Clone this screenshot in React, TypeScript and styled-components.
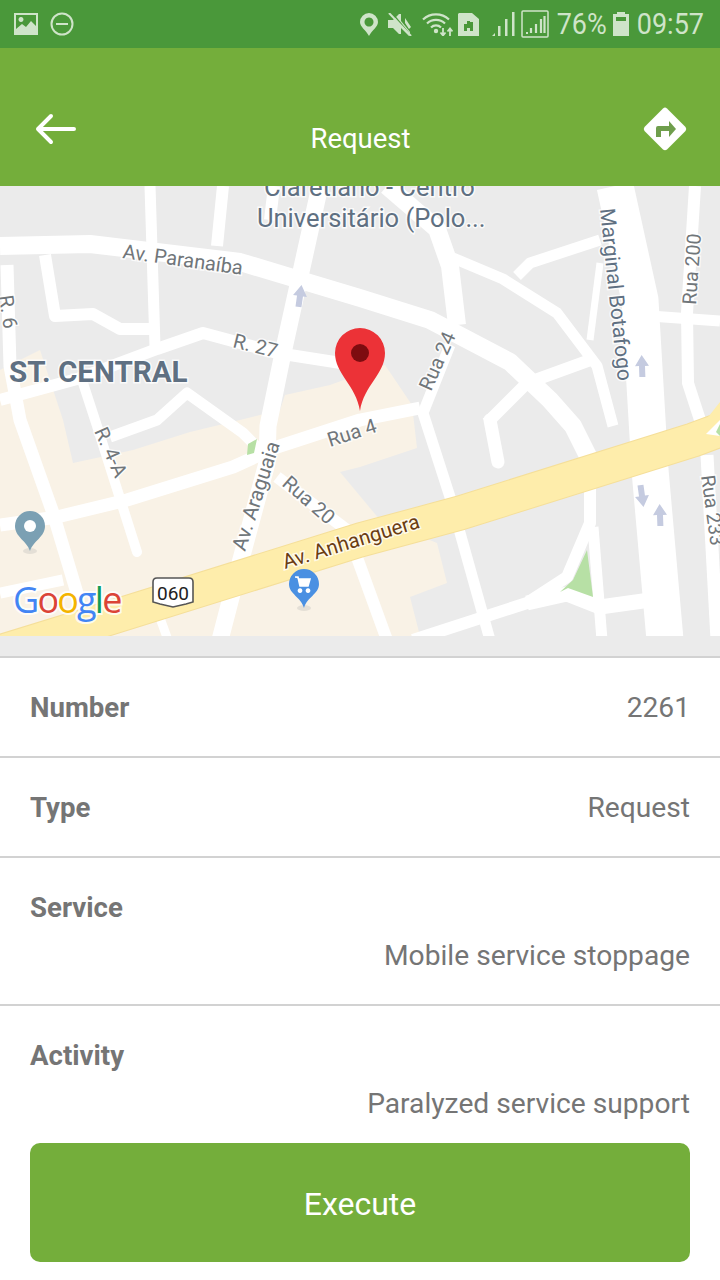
import React from "react";
import styled, { createGlobalStyle } from "styled-components";

const GlobalStyle = createGlobalStyle`
  html, body {
    margin: 0;
    padding: 0;
    background: #ffffff;
  }
  body {
    font-family: Roboto, "Liberation Sans", sans-serif;
  }
`;

const Page = styled.div`
  width: 720px;
  height: 1280px;
  overflow: hidden;
  display: flex;
  flex-direction: column;
  background: #ffffff;
`;

const StatusBar = styled.div`
  height: 48px;
  flex: none;
  background: #4a983a;
  color: #cfe4c9;
  display: flex;
  align-items: center;
  justify-content: space-between;
  padding: 0 16px 0 14px;
`;

const StatusGroup = styled.div`
  display: flex;
  align-items: center;
`;

const StatusIcon = styled.svg<{ $ml?: number }>`
  display: block;
  flex: none;
  margin-left: ${(p) => p.$ml ?? 0}px;
`;

const StatusText = styled.span<{ $ml: number }>`
  margin-left: ${(p) => p.$ml}px;
  font-size: 27px;
  line-height: 48px;
  transform: scaleY(1.08);
`;

const AppBar = styled.header`
  height: 138px;
  flex: none;
  background: #74ae3b;
  display: grid;
  grid-template-columns: 1fr auto 1fr;
  align-items: center;
  padding: 0 33px 0 34px;
  color: #ffffff;
`;

const AppTitle = styled.h1`
  margin: 44px 0 0;
  font-size: 27.500px;
  line-height: 36px;
  font-weight: 400;
`;

const IconSlot = styled.div<{ $end?: boolean }>`
  display: flex;
  margin-top: 24px;
  justify-content: ${(p) => (p.$end ? "flex-end" : "flex-start")};
`;

const MapPanel = styled.svg`
  display: block;
  flex: none;
  width: 720px;
  height: 450px;
  background: #ebebeb;
`;

const Road = styled.polyline<{ $w: number; $cap?: string }>`
  fill: none;
  stroke: #ffffff;
  stroke-width: ${(p) => p.$w}px;
  stroke-linejoin: round;
  stroke-linecap: ${(p) => p.$cap ?? "butt"};
`;

const Highway = styled.polyline<{ $edge?: boolean }>`
  fill: none;
  stroke: ${(p) => (p.$edge ? "#f5df9a" : "#feedab")};
  stroke-width: ${(p) => (p.$edge ? 35 : 33)}px;
  stroke-linejoin: round;
`;

const MapLabel = styled.text<{ $size: number; $color: string; $bold?: boolean }>`
  font-family: Roboto, "Liberation Sans", sans-serif;
  font-size: ${(p) => p.$size}px;
  font-weight: ${(p) => (p.$bold ? 700 : 400)};
  fill: ${(p) => p.$color};
  stroke: #ffffff;
  stroke-width: 3px;
  stroke-opacity: 0.75;
  paint-order: stroke;
`;

const GoogleMark = styled.text`
  font-family: "Open Sans", Roboto, sans-serif;
  font-size: 36px;
  font-weight: 500;
  letter-spacing: -1.800px;
  stroke: #ffffff;
  stroke-width: 4px;
  stroke-opacity: 0.8;
  paint-order: stroke;
`;

const ShieldNumber = styled.text`
  font-family: Roboto, "Liberation Sans", sans-serif;
  font-size: 19px;
  fill: #222222;
  text-anchor: middle;
`;

const MapGap = styled.div`
  height: 20px;
  flex: none;
  background: #ebebeb;
`;

const InfoRow = styled.div<{ $stacked?: boolean }>`
  flex: none;
  border-top: 2px solid #d2d2d2;
  padding: 26px 30px 24px;
  display: ${(p) => (p.$stacked ? "block" : "flex")};
  justify-content: space-between;
  font-size: 28.200px;
  line-height: 48px;
  color: #757575;
`;

const InfoLabel = styled.div`
  font-size: 27.600px;
  font-weight: 700;
`;

const InfoValue = styled.div`
  text-align: right;
`;

const ExecuteButton = styled.button`
  display: block;
  flex: none;
  margin: -9px 30px 0;
  height: 119px;
  width: 660px;
  padding: 2px 0 0;
  border: none;
  border-radius: 10px;
  background: #74ae3b;
  color: #ffffff;
  font-family: Roboto, "Liberation Sans", sans-serif;
  font-size: 32px;
`;

const beige =
  "0,370 40,350 63,420 73,463 133,450 190,432 240,420 280,410 285,395 330,385 385,365 412,405 417,448 360,467 340,472 380,520 437,543 447,583 410,597 420,636 0,636";

const roads: { pts: string; w: number; cap?: string }[] = [
  { pts: "0,246 90,244 240,262 300,280 360,298 430,320 510,362 550,400 573,426 590,460", w: 18 },
  { pts: "150,186 155,346", w: 11 },
  { pts: "223,186 217,246", w: 12 },
  { pts: "274,186 270,220", w: 12 },
  { pts: "320,186 283,353 268,426 267,463 240,563 220,640", w: 17 },
  { pts: "0,400 77,379 157,349 203,333 277,353 360,366", w: 12 },
  { pts: "45,255 55,316 93,314 120,329 150,329", w: 12 },
  { pts: "7,265 10,366 20,420 53,513 77,593 84,640", w: 13 },
  { pts: "83,383 97,426 137,552", w: 10, cap: "round" },
  { pts: "0,525 57,517 127,500 233,467 277,447 360,420 420,408", w: 13 },
  { pts: "450,345 423,413 450,497 490,640", w: 11 },
  { pts: "387,186 437,229 450,266 457,325", w: 18 },
  { pts: "453,258 503,279 557,313 597,366 613,426", w: 11 },
  { pts: "517,276 530,263 600,240", w: 11 },
  { pts: "615,186 640,300 650,470 665,640", w: 37 },
  { pts: "600,263 590,340", w: 7 },
  { pts: "487,423 527,383 593,359", w: 12 },
  { pts: "490,420 498,462", w: 13, cap: "round" },
  { pts: "695,186 687,313 688,383 700,420", w: 12 },
  { pts: "650,316 720,321", w: 11 },
  { pts: "707,455 717,640", w: 13 },
  { pts: "590,470 590,523 567,577 527,603 413,640", w: 12 },
  { pts: "593,527 602,640", w: 11 },
  { pts: "527,603 567,594 600,607 650,600", w: 15 },
  { pts: "0,593 63,580", w: 11 },
  { pts: "277,477 347,530 387,640", w: 12 },
  { pts: "160,618 168,640", w: 9 },
  { pts: "110,437 157,420 187,393 243,433 270,460", w: 11 },
];

const labels: { text: string; x: number; y: number; size: number; color: string; angle?: number; bold?: boolean }[] = [
  { text: "Claretiano - Centro", x: 264, y: 196, size: 25.500, color: "#5f7082" },
  { text: "Universitário (Polo...", x: 257, y: 227, size: 25.500, color: "#5f7082" },
  { text: "ST. CENTRAL", x: 9, y: 382, size: 29.600, color: "#5f7082", bold: true },
  { text: "Av. Paranaíba", x: 122, y: 258, size: 20, color: "#70767a", angle: 8 },
  { text: "R. 27", x: 232, y: 347, size: 20, color: "#70767a", angle: 14 },
  { text: "R. 6", x: -1, y: 296, size: 20, color: "#70767a", angle: 82 },
  { text: "R. 4-A", x: 94, y: 431, size: 20, color: "#70767a", angle: 66 },
  { text: "Rua 4", x: 330, y: 447, size: 20, color: "#70767a", angle: -18 },
  { text: "Rua 24", x: 431, y: 392, size: 20, color: "#70767a", angle: -66 },
  { text: "Marginal Botafogo", x: 600, y: 209, size: 21, color: "#5f7082", angle: 84 },
  { text: "Rua 200", x: 696, y: 305, size: 19.500, color: "#70767a", angle: -86 },
  { text: "Rua 233", x: 701, y: 476, size: 19.500, color: "#70767a", angle: 82 },
  { text: "Av. Araguaia", x: 245, y: 552, size: 20.500, color: "#70767a", angle: -72 },
  { text: "Rua 20", x: 281, y: 485, size: 20, color: "#70767a", angle: 41 },
  { text: "Av. Anhanguera", x: 285, y: 569, size: 20.500, color: "#6b3d12", angle: -17 },
];

// one-way arrows on the map: x, y, angle
const arrows = [
  [300, 296, 8],
  [642, 366, -2],
  [642, 496, 172],
  [660, 515, -2],
];

const RoadMap: React.FC = () => (
  <MapPanel viewBox="0 186 720 450">
    <polygon points={beige} fill="#f9f2e6" />
    <polygon points="0,500 20,500 40,600 0,610" fill="#f9f2e6" />
    {roads.map((r) => (
      <Road key={r.pts} points={r.pts} $w={r.w} $cap={r.cap} />
    ))}
    <Highway $edge points="-10,655 110,618 360,540 460,513 693,440 720,430" />
    <Highway points="-10,655 110,618 360,540 460,513 693,440 720,430" />
    <polygon points="690,440 720,402 720,445" fill="#feedab" />
    <polygon points="706,434 720,420 720,436" fill="#ffffff" />
    <polygon points="716,432 720,424 720,436" fill="#b7e0a5" />
    <polygon points="587,550 593,597 568,588 560,592 573,580" fill="#b7e0a5" />
    <polygon points="248,444 257,439 254,453 247,455" fill="#b7e0a5" />
    {arrows.map(([x, y, a]) => (
      <path
        key={`${x}-${y}`}
        transform={`rotate(${a} ${x} ${y})`}
        d={`M${x} ${y - 11}l7 11h-4v11h-6v-11h-4z`}
        fill="#c5cbe0"
      />
    ))}
    {labels.map((l) => (
      <MapLabel
        key={l.text}
        x={l.x}
        y={l.y}
        $size={l.size}
        $color={l.color}
        $bold={l.bold}
        transform={l.angle ? `rotate(${l.angle} ${l.x} ${l.y})` : undefined}
      >
        {l.text}
      </MapLabel>
    ))}
    <path d="M360 411C356 385 335 374 335 353a25 25 0 0 1 50 0C385 374 364 385 360 411Z" fill="#ec3237" />
    <circle cx="360" cy="353" r="9" fill="#7e0c10" />
    <ellipse cx="30" cy="551" rx="7" ry="3" fill="#e4dfd6" />
    <path d="M30 551C27 541 15 537 15 526a15 15 0 0 1 30 0C45 537 33 541 30 551Z" fill="#7ba0b3" />
    <circle cx="30" cy="526" r="6" fill="#ffffff" />
    <ellipse cx="304" cy="608" rx="7" ry="3" fill="#e4dfd6" />
    <path d="M304 608C301 597 289 594 289 584a15 15 0 0 1 30 0C319 594 307 597 304 608Z" fill="#4a90e2" />
    <path
      d="M295 577h3l2 9h8l2-7h-11M300 589a1.600 1.600 0 1 0 .01 0M308 589a1.600 1.600 0 1 0 .01 0"
      fill="#ffffff"
      stroke="#ffffff"
      strokeWidth="1.600"
    />
    <path
      d="M157 578h32q4 0 4 4v20l-7 2-13 3-13-3-7-2v-20q0-4 4-4Z"
      fill="#ffffff"
      stroke="#555555"
      strokeWidth="1.600"
    />
    <ShieldNumber x="173" y="600">060</ShieldNumber>
    <GoogleMark x="13" y="613">
      <tspan fill="#4285f4">G</tspan>
      <tspan fill="#db4437">o</tspan>
      <tspan fill="#f4b400">o</tspan>
      <tspan fill="#4285f4">g</tspan>
      <tspan fill="#0f9d58">l</tspan>
      <tspan fill="#db4437">e</tspan>
    </GoogleMark>
  </MapPanel>
);

const App: React.FC = () => (
  <Page>
    <GlobalStyle />
    <StatusBar>
      <StatusGroup>
        <StatusIcon width="24" height="22" viewBox="0 0 24 22">
          <path
            fill="currentColor"
            fillRule="evenodd"
            d="M0 0h24v22H0zM2 2v14l6-5 4 3 5-6 5 5V2zM7 4a2.500 2.500 0 1 1-.01 0z"
          />
        </StatusIcon>
        <StatusIcon $ml={12} width="24" height="24" viewBox="0 0 24 24" fill="none" stroke="currentColor" strokeWidth="2">
          <circle cx="12" cy="12" r="10.500" />
          <path d="M6 12h12" />
        </StatusIcon>
      </StatusGroup>
      <StatusGroup>
        <StatusIcon width="18" height="23" viewBox="0 0 18 23">
          <path
            fill="currentColor"
            fillRule="evenodd"
            d="M9 23C6 17 0 14 0 9a9 9 0 0 1 18 0c0 5-6 8-9 14ZM9 4.500a4.500 4.500 0 1 0 .01 0Z"
          />
        </StatusIcon>
        <StatusIcon $ml={10} width="24" height="23" viewBox="0 0 24 23">
          <path fill="currentColor" d="M0 7h5l6-6h2v7l9 11v3l-1 1L13 15v6l-2 0-6-6H0z" />
          <path stroke="#4a983a" strokeWidth="1.500" d="M4 0l19 23" />
          <path stroke="currentColor" strokeWidth="2" d="M1 0l22 23" />
          <path fill="currentColor" d="M17 5l6 9-2 2-4-6z" />
        </StatusIcon>
        <StatusIcon $ml={10} width="31" height="24" viewBox="0 0 31 24" fill="none" stroke="currentColor" strokeWidth="2.200">
          <path d="M1 7.500a19 19 0 0 1 26 0M5 11.500a13 13 0 0 1 18 0M9 15.500a7 7 0 0 1 10 0" />
          <circle cx="14" cy="19" r="2.200" fill="currentColor" stroke="none" />
          <path d="M21 16v7M18.500 20.500l2.500 3 2.500-3M28 24v-7M25.500 19.500l2.500-3 2.500 3" strokeWidth="1.800" />
        </StatusIcon>
        <StatusIcon $ml={5} width="21" height="23" viewBox="0 0 21 23">
          <path
            fill="currentColor"
            fillRule="evenodd"
            d="M1 0h13l7 6v17H0V1zM6 11v7h3v-3h3v3h3v-9h-3V8H9v3z"
          />
        </StatusIcon>
        <StatusIcon $ml={13} width="24" height="24" viewBox="0 0 24 24" fill="currentColor">
          <path d="M0 24l3-3v3zM6 14h2.500v10H6zM13 7h2.500v17H13zM20 0h2.500v24H20z" />
        </StatusIcon>
        <StatusIcon $ml={5} width="28" height="28" viewBox="0 0 28 28" fill="none" stroke="currentColor" strokeWidth="1.500">
          <rect x="1" y="1" width="26" height="26" rx="1" />
          <path d="M5 23h2M10 23v-5M15 23v-9M20 23V9M23.500 23V6" strokeWidth="2.200" />
        </StatusIcon>
        <StatusText $ml={8}>76%</StatusText>
        <StatusIcon $ml={6} width="16" height="24" viewBox="0 0 16 24">
          <path fill="currentColor" fillRule="evenodd" d="M4 0h8v2h4v22H0V2h4zM3 5v4h10V5z" />
        </StatusIcon>
        <StatusText $ml={8}>09:57</StatusText>
      </StatusGroup>
    </StatusBar>
    <AppBar>
      <IconSlot>
        <svg width="42" height="32" viewBox="0 0 42 32" fill="none" stroke="#ffffff" strokeWidth="4" strokeLinecap="round" strokeLinejoin="round">
          <path d="M40 16H4M17 3L4 16l13 13" />
        </svg>
      </IconSlot>
      <AppTitle>Request</AppTitle>
      <IconSlot $end>
        <svg width="44" height="44" viewBox="0 0 44 44">
          <path d="M22 0.500Q23 0.500 24 1.500L42.500 20Q44 22 42.500 24L24 42.500Q22 44 20 42.500L1.500 24Q0 22 1.500 20L20 1.500Q21 0.500 22 0.500Z" fill="#ffffff" />
          <path d="M13 30v-9q0-2 2-2h11v-5l7 8-7 8v-6h-8v6z" fill="#6f9e4c" />
        </svg>
      </IconSlot>
    </AppBar>
    <RoadMap />
    <MapGap />
    <InfoRow>
      <InfoLabel>Number</InfoLabel>
      <InfoValue>2261</InfoValue>
    </InfoRow>
    <InfoRow>
      <InfoLabel>Type</InfoLabel>
      <InfoValue>Request</InfoValue>
    </InfoRow>
    <InfoRow $stacked>
      <InfoLabel>Service</InfoLabel>
      <InfoValue>Mobile service stoppage</InfoValue>
    </InfoRow>
    <InfoRow $stacked>
      <InfoLabel>Activity</InfoLabel>
      <InfoValue>Paralyzed service support</InfoValue>
    </InfoRow>
    <ExecuteButton>Execute</ExecuteButton>
  </Page>
);

export default App;
